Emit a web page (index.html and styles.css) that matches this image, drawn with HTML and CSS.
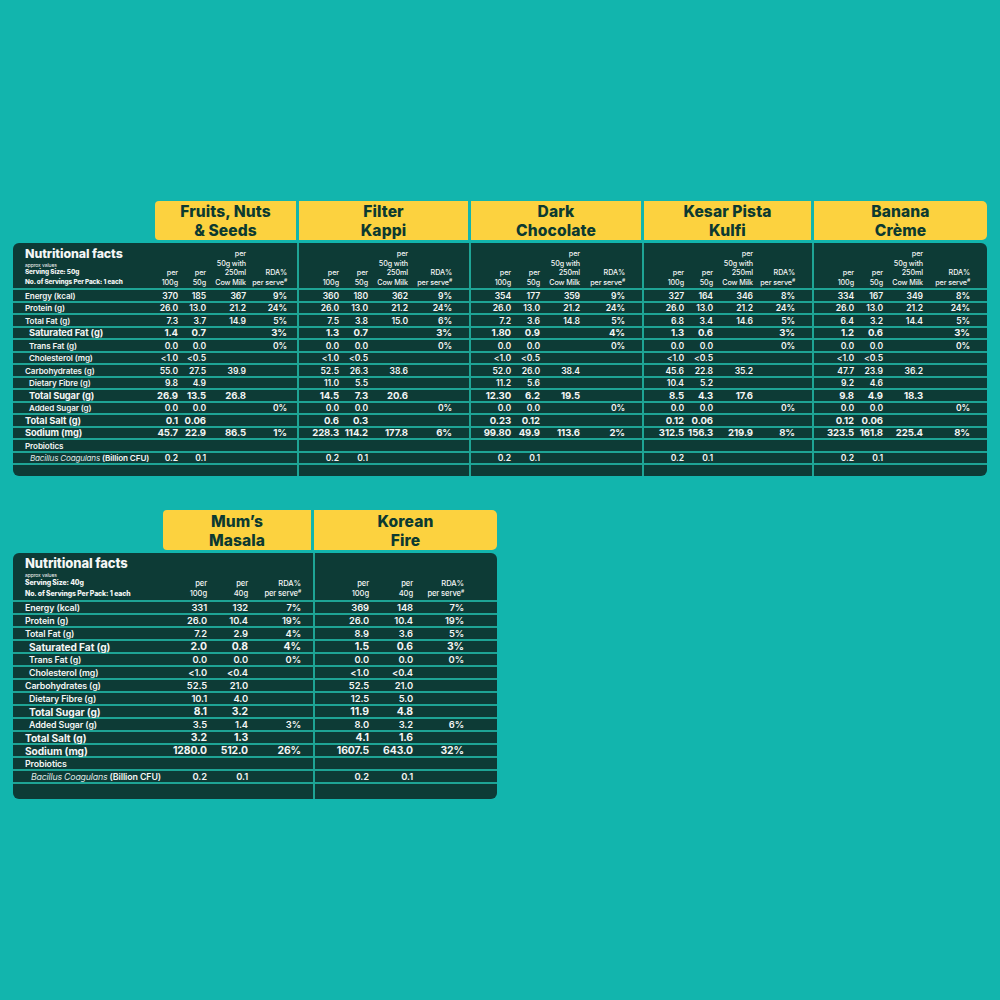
FILE: index.html
```html
<!DOCTYPE html>
<html lang="en">
<head>
<meta charset="utf-8">
<title>Nutritional facts</title>
<link rel="stylesheet" href="styles.css">
</head>
<body>
<main class="page">
  <section class="panel panel-top">
    <div class="tabs tabs-top">
      <div class="tab t1">Fruits, Nuts<br>&amp; Seeds</div>
      <div class="tab t2">Filter<br>Kappi</div>
      <div class="tab t3">Dark<br>Chocolate</div>
      <div class="tab t4">Kesar Pista<br>Kulfi</div>
      <div class="tab t5">Banana<br>Crème</div>
    </div>
    <div class="box">
      <table class="facts facts-top">
        <colgroup>
          <col class="w125">
          <col class="w40"><col class="w28"><col class="w40"><col class="w51">
          <col class="w42"><col class="w29"><col class="w40"><col class="w61">
          <col class="w42"><col class="w29"><col class="w40"><col class="w62">
          <col class="w42"><col class="w29"><col class="w40"><col class="w59">
          <col class="w42"><col class="w29"><col class="w40"><col class="w64">
        </colgroup>
        <tr class="hd">
          <th class="hl"><div class="nf">Nutritional facts</div><div class="ap">approx values</div><div class="ss">Serving Size: 50g</div><div class="ss">No. of Servings Per Pack: 1 each</div></th>
          <th>per<br>100g</th><th>per<br>50g</th><th>per<br>50g with<br>250ml<br>Cow Milk</th><th class="e1">RDA%<br>per serve<sup>#</sup></th>
          <th class="g">per<br>100g</th><th>per<br>50g</th><th>per<br>50g with<br>250ml<br>Cow Milk</th><th class="e">RDA%<br>per serve<sup>#</sup></th>
          <th class="g">per<br>100g</th><th>per<br>50g</th><th>per<br>50g with<br>250ml<br>Cow Milk</th><th class="e">RDA%<br>per serve<sup>#</sup></th>
          <th class="g">per<br>100g</th><th>per<br>50g</th><th>per<br>50g with<br>250ml<br>Cow Milk</th><th class="e">RDA%<br>per serve<sup>#</sup></th>
          <th class="g">per<br>100g</th><th>per<br>50g</th><th>per<br>50g with<br>250ml<br>Cow Milk</th><th class="e">RDA%<br>per serve<sup>#</sup></th>
        </tr>
        <tr><th class="l">Energy (kcal)</th>
          <td>370</td><td>185</td><td>367</td><td class="e1">9%</td>
          <td class="g">360</td><td>180</td><td>362</td><td class="e">9%</td>
          <td class="g">354</td><td>177</td><td>359</td><td class="e">9%</td>
          <td class="g">327</td><td>164</td><td>346</td><td class="e">8%</td>
          <td class="g">334</td><td>167</td><td>349</td><td class="e">8%</td></tr>
        <tr><th class="l">Protein (g)</th>
          <td>26.0</td><td>13.0</td><td>21.2</td><td class="e1">24%</td>
          <td class="g">26.0</td><td>13.0</td><td>21.2</td><td class="e">24%</td>
          <td class="g">26.0</td><td>13.0</td><td>21.2</td><td class="e">24%</td>
          <td class="g">26.0</td><td>13.0</td><td>21.2</td><td class="e">24%</td>
          <td class="g">26.0</td><td>13.0</td><td>21.2</td><td class="e">24%</td></tr>
        <tr><th class="l">Total Fat (g)</th>
          <td>7.3</td><td>3.7</td><td>14.9</td><td class="e1">5%</td>
          <td class="g">7.5</td><td>3.8</td><td>15.0</td><td class="e">6%</td>
          <td class="g">7.2</td><td>3.6</td><td>14.8</td><td class="e">5%</td>
          <td class="g">6.8</td><td>3.4</td><td>14.6</td><td class="e">5%</td>
          <td class="g">6.4</td><td>3.2</td><td>14.4</td><td class="e">5%</td></tr>
        <tr class="b in"><th class="l">Saturated Fat (g)</th>
          <td>1.4</td><td>0.7</td><td></td><td class="e1">3%</td>
          <td class="g">1.3</td><td>0.7</td><td></td><td class="e">3%</td>
          <td class="g">1.80</td><td>0.9</td><td></td><td class="e">4%</td>
          <td class="g">1.3</td><td>0.6</td><td></td><td class="e">3%</td>
          <td class="g">1.2</td><td>0.6</td><td></td><td class="e">3%</td></tr>
        <tr class="in"><th class="l">Trans Fat (g)</th>
          <td>0.0</td><td>0.0</td><td></td><td class="e1">0%</td>
          <td class="g">0.0</td><td>0.0</td><td></td><td class="e">0%</td>
          <td class="g">0.0</td><td>0.0</td><td></td><td class="e">0%</td>
          <td class="g">0.0</td><td>0.0</td><td></td><td class="e">0%</td>
          <td class="g">0.0</td><td>0.0</td><td></td><td class="e">0%</td></tr>
        <tr class="in"><th class="l">Cholesterol (mg)</th>
          <td>&lt;1.0</td><td>&lt;0.5</td><td></td><td class="e1"></td>
          <td class="g">&lt;1.0</td><td>&lt;0.5</td><td></td><td class="e"></td>
          <td class="g">&lt;1.0</td><td>&lt;0.5</td><td></td><td class="e"></td>
          <td class="g">&lt;1.0</td><td>&lt;0.5</td><td></td><td class="e"></td>
          <td class="g">&lt;1.0</td><td>&lt;0.5</td><td></td><td class="e"></td></tr>
        <tr><th class="l">Carbohydrates (g)</th>
          <td>55.0</td><td>27.5</td><td>39.9</td><td class="e1"></td>
          <td class="g">52.5</td><td>26.3</td><td>38.6</td><td class="e"></td>
          <td class="g">52.0</td><td>26.0</td><td>38.4</td><td class="e"></td>
          <td class="g">45.6</td><td>22.8</td><td>35.2</td><td class="e"></td>
          <td class="g">47.7</td><td>23.9</td><td>36.2</td><td class="e"></td></tr>
        <tr class="in"><th class="l">Dietary Fibre (g)</th>
          <td>9.8</td><td>4.9</td><td></td><td class="e1"></td>
          <td class="g">11.0</td><td>5.5</td><td></td><td class="e"></td>
          <td class="g">11.2</td><td>5.6</td><td></td><td class="e"></td>
          <td class="g">10.4</td><td>5.2</td><td></td><td class="e"></td>
          <td class="g">9.2</td><td>4.6</td><td></td><td class="e"></td></tr>
        <tr class="b in"><th class="l">Total Sugar (g)</th>
          <td>26.9</td><td>13.5</td><td>26.8</td><td class="e1"></td>
          <td class="g">14.5</td><td>7.3</td><td>20.6</td><td class="e"></td>
          <td class="g">12.30</td><td>6.2</td><td>19.5</td><td class="e"></td>
          <td class="g">8.5</td><td>4.3</td><td>17.6</td><td class="e"></td>
          <td class="g">9.8</td><td>4.9</td><td>18.3</td><td class="e"></td></tr>
        <tr class="in"><th class="l">Added Sugar (g)</th>
          <td>0.0</td><td>0.0</td><td></td><td class="e1">0%</td>
          <td class="g">0.0</td><td>0.0</td><td></td><td class="e">0%</td>
          <td class="g">0.0</td><td>0.0</td><td></td><td class="e">0%</td>
          <td class="g">0.0</td><td>0.0</td><td></td><td class="e">0%</td>
          <td class="g">0.0</td><td>0.0</td><td></td><td class="e">0%</td></tr>
        <tr class="b"><th class="l">Total Salt (g)</th>
          <td>0.1</td><td>0.06</td><td></td><td class="e1"></td>
          <td class="g">0.6</td><td>0.3</td><td></td><td class="e"></td>
          <td class="g">0.23</td><td>0.12</td><td></td><td class="e"></td>
          <td class="g">0.12</td><td>0.06</td><td></td><td class="e"></td>
          <td class="g">0.12</td><td>0.06</td><td></td><td class="e"></td></tr>
        <tr class="b"><th class="l">Sodium (mg)</th>
          <td>45.7</td><td>22.9</td><td>86.5</td><td class="e1">1%</td>
          <td class="g">228.3</td><td>114.2</td><td>177.8</td><td class="e">6%</td>
          <td class="g">99.80</td><td>49.9</td><td>113.6</td><td class="e">2%</td>
          <td class="g">312.5</td><td>156.3</td><td>219.9</td><td class="e">8%</td>
          <td class="g">323.5</td><td>161.8</td><td>225.4</td><td class="e">8%</td></tr>
        <tr><th class="l">Probiotics</th>
          <td></td><td></td><td></td><td class="e1"></td>
          <td class="g"></td><td></td><td></td><td class="e"></td>
          <td class="g"></td><td></td><td></td><td class="e"></td>
          <td class="g"></td><td></td><td></td><td class="e"></td>
          <td class="g"></td><td></td><td></td><td class="e"></td></tr>
        <tr class="bac"><th class="l"><i>Bacillus Coagulans</i> (Billion CFU)</th>
          <td>0.2</td><td>0.1</td><td></td><td class="e1"></td>
          <td class="g">0.2</td><td>0.1</td><td></td><td class="e"></td>
          <td class="g">0.2</td><td>0.1</td><td></td><td class="e"></td>
          <td class="g">0.2</td><td>0.1</td><td></td><td class="e"></td>
          <td class="g">0.2</td><td>0.1</td><td></td><td class="e"></td></tr>
        <tr class="end"><th></th>
          <td></td><td></td><td></td><td></td>
          <td class="g"></td><td></td><td></td><td></td>
          <td class="g"></td><td></td><td></td><td></td>
          <td class="g"></td><td></td><td></td><td></td>
          <td class="g"></td><td></td><td></td><td></td></tr>
      </table>
    </div>
  </section>

  <section class="panel panel-bottom">
    <div class="tabs tabs-bottom">
      <div class="tab m1">Mum’s<br>Masala</div>
      <div class="tab m2">Korean<br>Fire</div>
    </div>
    <div class="box">
      <table class="facts facts-bottom">
        <colgroup>
          <col class="w138">
          <col class="w56"><col class="w41"><col class="w65">
          <col class="w56"><col class="w44"><col class="w84">
        </colgroup>
        <tr class="hd">
          <th class="hl"><div class="nf">Nutritional facts</div><div class="ap">approx values</div><div class="ss">Serving Size: 40g</div><div class="ss">No. of Servings Per Pack: 1 each</div></th>
          <th>per<br>100g</th><th>per<br>40g</th><th class="e2">RDA%<br>per serve<sup>#</sup></th>
          <th class="g">per<br>100g</th><th>per<br>40g</th><th class="e3">RDA%<br>per serve<sup>#</sup></th>
        </tr>
        <tr><th class="l">Energy (kcal)</th>
          <td>331</td><td>132</td><td class="e2">7%</td>
          <td class="g">369</td><td>148</td><td class="e3">7%</td></tr>
        <tr><th class="l">Protein (g)</th>
          <td>26.0</td><td>10.4</td><td class="e2">19%</td>
          <td class="g">26.0</td><td>10.4</td><td class="e3">19%</td></tr>
        <tr><th class="l">Total Fat (g)</th>
          <td>7.2</td><td>2.9</td><td class="e2">4%</td>
          <td class="g">8.9</td><td>3.6</td><td class="e3">5%</td></tr>
        <tr class="b in"><th class="l">Saturated Fat (g)</th>
          <td>2.0</td><td>0.8</td><td class="e2">4%</td>
          <td class="g">1.5</td><td>0.6</td><td class="e3">3%</td></tr>
        <tr class="in"><th class="l">Trans Fat (g)</th>
          <td>0.0</td><td>0.0</td><td class="e2">0%</td>
          <td class="g">0.0</td><td>0.0</td><td class="e3">0%</td></tr>
        <tr class="in"><th class="l">Cholesterol (mg)</th>
          <td>&lt;1.0</td><td>&lt;0.4</td><td class="e2"></td>
          <td class="g">&lt;1.0</td><td>&lt;0.4</td><td class="e3"></td></tr>
        <tr><th class="l">Carbohydrates (g)</th>
          <td>52.5</td><td>21.0</td><td class="e2"></td>
          <td class="g">52.5</td><td>21.0</td><td class="e3"></td></tr>
        <tr class="in"><th class="l">Dietary Fibre (g)</th>
          <td>10.1</td><td>4.0</td><td class="e2"></td>
          <td class="g">12.5</td><td>5.0</td><td class="e3"></td></tr>
        <tr class="b in"><th class="l">Total Sugar (g)</th>
          <td>8.1</td><td>3.2</td><td class="e2"></td>
          <td class="g">11.9</td><td>4.8</td><td class="e3"></td></tr>
        <tr class="in"><th class="l">Added Sugar (g)</th>
          <td>3.5</td><td>1.4</td><td class="e2">3%</td>
          <td class="g">8.0</td><td>3.2</td><td class="e3">6%</td></tr>
        <tr class="b"><th class="l">Total Salt (g)</th>
          <td>3.2</td><td>1.3</td><td class="e2"></td>
          <td class="g">4.1</td><td>1.6</td><td class="e3"></td></tr>
        <tr class="b"><th class="l">Sodium (mg)</th>
          <td>1280.0</td><td>512.0</td><td class="e2">26%</td>
          <td class="g">1607.5</td><td>643.0</td><td class="e3">32%</td></tr>
        <tr><th class="l">Probiotics</th>
          <td></td><td></td><td class="e2"></td>
          <td class="g"></td><td></td><td class="e3"></td></tr>
        <tr class="bac"><th class="l"><i>Bacillus Coagulans</i> (Billion CFU)</th>
          <td>0.2</td><td>0.1</td><td class="e2"></td>
          <td class="g">0.2</td><td>0.1</td><td class="e3"></td></tr>
        <tr class="end"><th></th>
          <td></td><td></td><td></td>
          <td class="g"></td><td></td><td></td></tr>
      </table>
    </div>
  </section>
</main>
</body>
</html>
```

FILE: styles.css
```css
:root {
  --bg: #12b5ad;
  --dark: #0d3b36;
  --line: #1ea495;
  --yellow: #fcd23f;
  --ink: #0c3a31;
}

body {
  margin: 0;
  background: var(--bg);
  font-family: Inter, "Open Sans", "Liberation Sans", sans-serif;
  color: #f4f6f5;
}

.page {
  padding: 201px 0 0 13px;
}

.panel-top { width: 974px; }
.panel-bottom { width: 484px; margin-top: 34px; }

.tabs {
  display: flex;
  gap: 3px;
  margin-bottom: 3px;
}
.tabs-top { height: 39px; margin-left: 142px; }
.tabs-bottom { height: 40px; margin-left: 150px; }

.tab {
  background: var(--yellow);
  color: var(--ink);
  font-weight: 800;
  font-size: 15.6px;
  line-height: 19px;
  letter-spacing: 0.1px;
  display: flex;
  align-items: center;
  justify-content: center;
  text-align: center;
  padding-top: 1px;
  box-sizing: border-box;
}
.t1 { width: 141px; border-radius: 4px 0 0 4px; }
.t2 { width: 169px; }
.t3 { width: 170px; }
.t4 { width: 167px; }
.t5 { width: 173px; border-radius: 0 5px 5px 0; }
.m1 { width: 148px; border-radius: 4px 0 0 4px; }
.m2 { width: 183px; border-radius: 0 5px 5px 0; }

.box {
  background: var(--dark);
  border-radius: 6px;
  overflow: hidden;
}

.facts {
  width: 100%;
  table-layout: fixed;
  border-collapse: separate;
  border-spacing: 0;
}

.w125 { width: 125px; }
.w138 { width: 138px; }
.w28 { width: 28px; }
.w29 { width: 29px; }
.w40 { width: 40px; }
.w41 { width: 41px; }
.w42 { width: 42px; }
.w44 { width: 44px; }
.w51 { width: 51px; }
.w56 { width: 56px; }
.w59 { width: 59px; }
.w61 { width: 61px; }
.w62 { width: 62px; }
.w64 { width: 64px; }
.w65 { width: 65px; }
.w84 { width: 84px; }

.facts th,
.facts td {
  padding: 0;
  white-space: nowrap;
  box-shadow: inset 0 -2px 0 var(--line);
}
.facts .g {
  box-shadow: inset 2px 0 0 var(--line), inset 0 -2px 0 var(--line);
}
.facts tr.end th,
.facts tr.end td { box-shadow: none; }
.facts tr.end td.g { box-shadow: inset 2px 0 0 var(--line); }

.facts td {
  text-align: right;
  vertical-align: middle;
  font-size: 8.6px;
  font-weight: 600;
  line-height: 10px;
  letter-spacing: -0.1px;
  padding-bottom: 1px;
}
.facts th.l {
  text-align: left;
  vertical-align: middle;
  padding-left: 12px;
  padding-bottom: 1px;
  font-size: 8.1px;
  font-weight: 600;
  line-height: 10px;
  letter-spacing: -0.1px;
}
.facts tr.in th.l { padding-left: 16px; }
.facts tr.b th.l { font-size: 9.3px; font-weight: 700; }
.facts tr.b td { font-size: 9.6px; font-weight: 700; }
.facts tr.bac th.l { padding-left: 17px; }
.facts tr.bac i { font-weight: 400; color: #dfe6e4; letter-spacing: -0.2px; }

.facts td.e { padding-right: 17px; }
.facts td.e1, .facts th.e1 { padding-right: 10px; }
.facts td.e2, .facts th.e2 { padding-right: 12px; }
.facts td.e3, .facts th.e3 { padding-right: 33px; }
.facts th.e { padding-right: 17px; }

/* header row */
.facts tr.hd th {
  vertical-align: bottom;
  text-align: right;
  font-size: 7.2px;
  font-weight: 500;
  line-height: 9.4px;
  letter-spacing: -0.1px;
  padding-bottom: 3px;
}
.facts tr.hd th.hl {
  text-align: left;
  padding-left: 12px;
}
.facts tr.hd sup {
  font-size: 5px;
  line-height: 0;
  vertical-align: 3px;
}
.nf {
  font-size: 12.4px;
  font-weight: 800;
  line-height: 14px;
  letter-spacing: -0.1px;
}
.ap {
  font-size: 5px;
  line-height: 6px;
  font-weight: 400;
  margin-top: 1px;
}
.ss {
  font-size: 6.4px;
  font-weight: 800;
  line-height: 9.4px;
}

/* top table rows */
.facts-top tr.hd { height: 47px; }
.facts-top tr { height: 12.5px; }
.facts-top tr.end { height: 11px; }

/* bottom table rows */
.facts-bottom tr.hd { height: 49px; }
.facts-bottom tr { height: 13px; }
.facts-bottom tr.end { height: 15px; }
.facts-bottom td { font-size: 9.4px; }
.facts-bottom th.l { font-size: 8.8px; }
.facts-bottom tr.b th.l { font-size: 10.2px; }
.facts-bottom tr.b td { font-size: 10.4px; }
.facts-bottom tr.hd th { font-size: 7.6px; line-height: 10px; }
.facts-bottom .nf { font-size: 13px; line-height: 15px; }
.facts-bottom .ss { font-size: 6.9px; line-height: 10.5px; }
.facts-bottom tr.bac th.l { padding-left: 18px; }
```
